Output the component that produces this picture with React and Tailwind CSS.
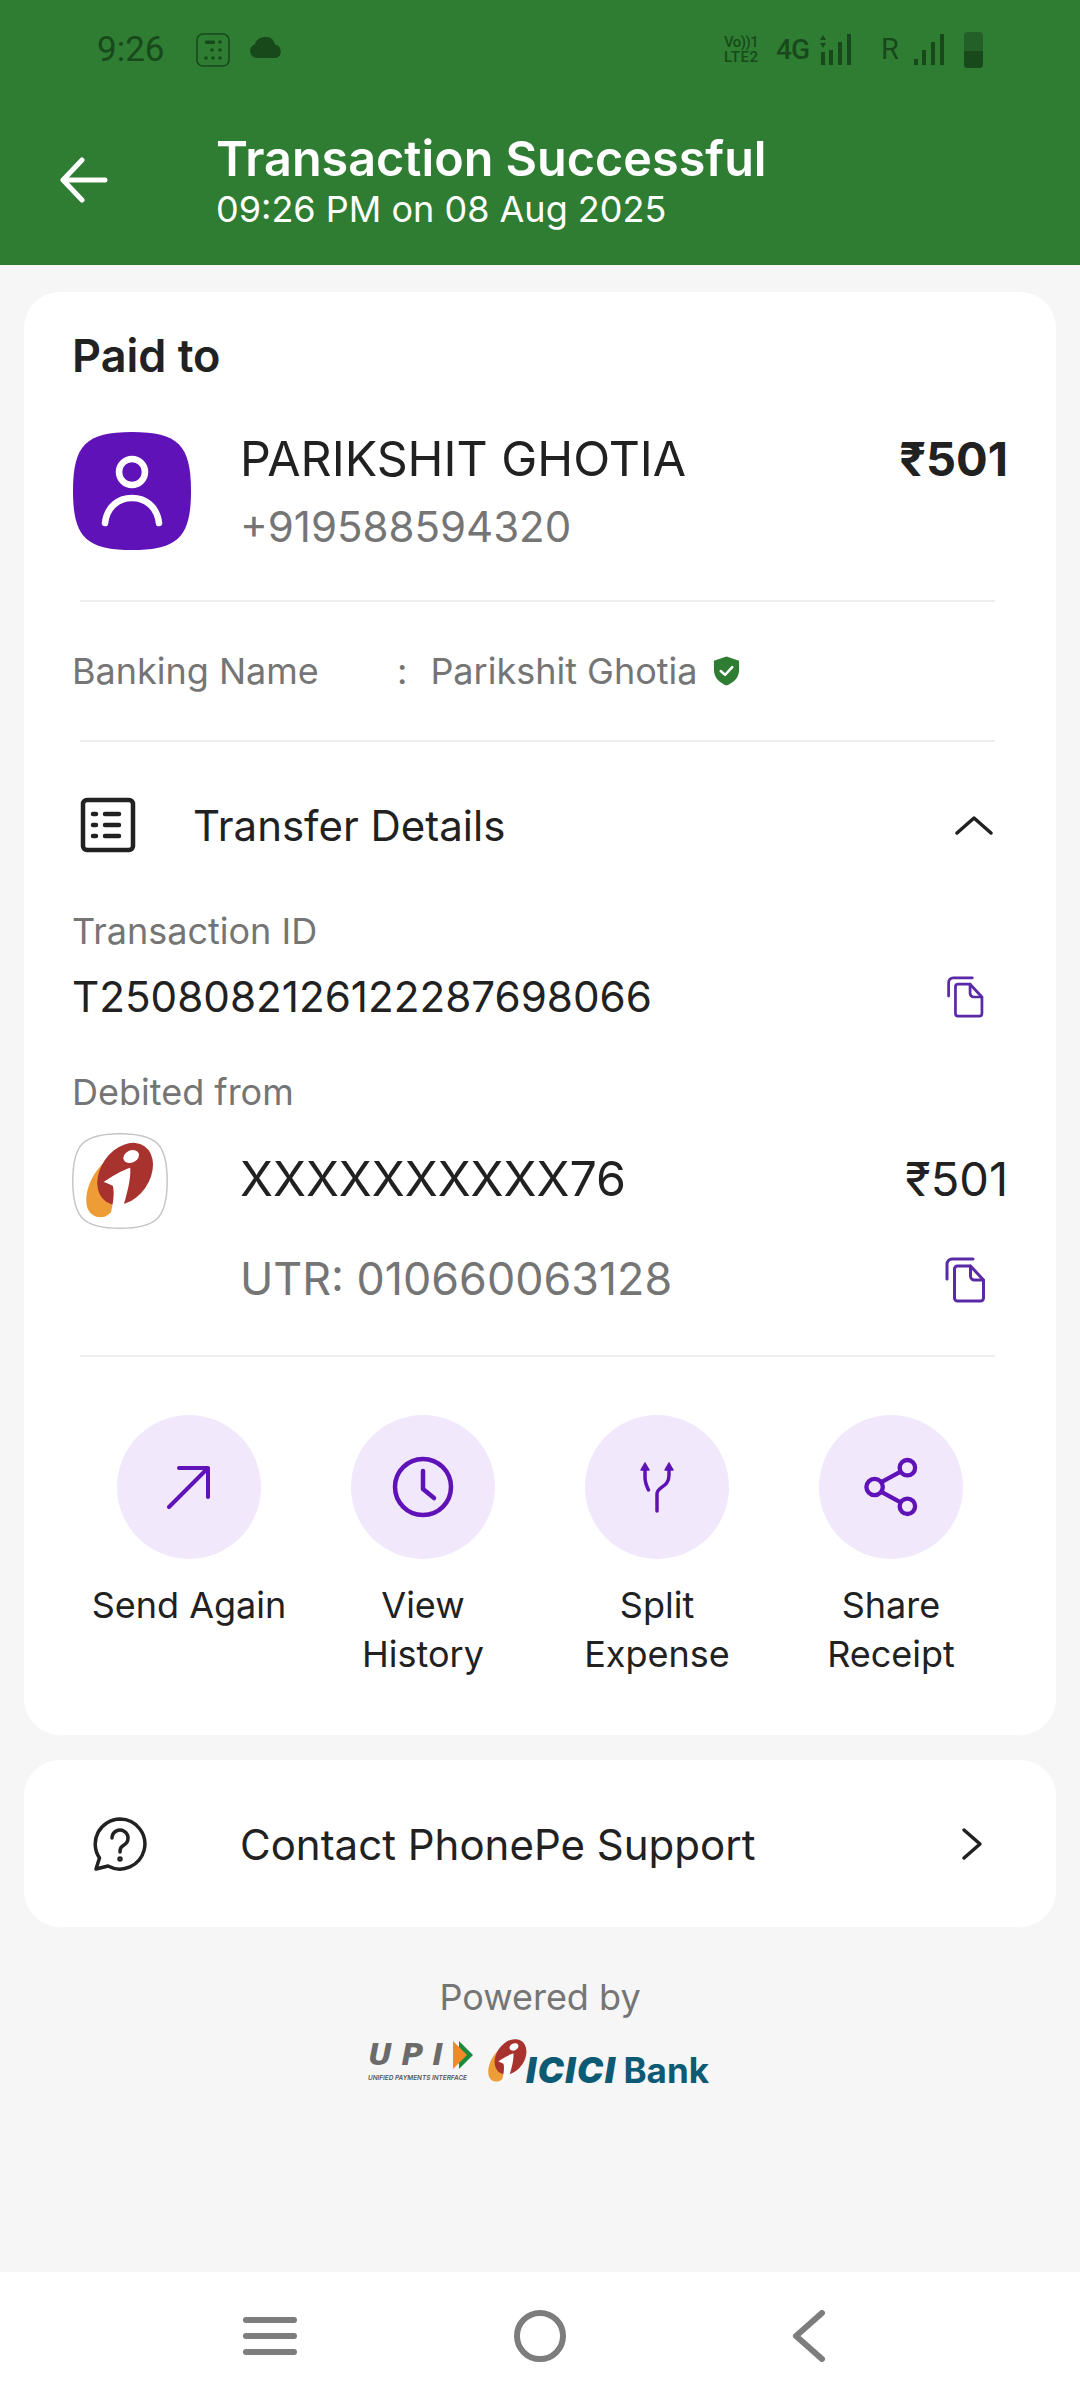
import React from "react";

const PURPLE = "#5f12b8";
const SQUIRCLE = "M60 1C106 1 119 14 119 60S106 119 60 119 1 106 1 60 14 1 60 1Z";

function Copy({ className }) {
  return (
    <svg viewBox="0 0 40 46" className={className} fill="none" stroke="#5a2aa6" strokeWidth="3" strokeLinecap="round" strokeLinejoin="round">
      <path d="M1.500 22V7a5 5 0 0 1 5-5h21" />
      <path d="M9 12a3 3 0 0 1 3-3h13l13 14v18a3 3 0 0 1-3 3H12a3 3 0 0 1-3-3z" />
      <path d="M25 9v10a4 4 0 0 0 4 4h9" />
    </svg>
  );
}

function IciciMark() {
  return (
    <>
      <path d="M30 30C18 42 13 58 14 68c1 12 10 16 18 14 10-4 20-22 26-32z" fill="#ee9c36" />
      <ellipse cx="52" cy="40" rx="24" ry="33" transform="rotate(35 52 40)" fill="#a8322e" />
      <ellipse cx="58" cy="23" rx="8" ry="6" transform="rotate(-25 58 23)" fill="#fff" />
      <path d="M31 48C38 43 50 36 57 34 58 46 53 62 49 76L36 86C40 72 42 60 40 52 37 50 34 49 31 48z" fill="#fff" />
    </>
  );
}

function Action({ label, children }) {
  return (
    <div className="flex flex-col items-center">
      <div className="w-[144px] h-[144px] rounded-full bg-[#f1e8fb] flex items-center justify-center">{children}</div>
      <div className="mt-[22px] text-center text-[36px] leading-[49px] text-[#212121] whitespace-pre-line">{label}</div>
    </div>
  );
}

function Divider({ className }) {
  return <div className={"ml-[56px] mr-[61px] h-[2px] bg-[#eeeeee] " + className} />;
}

function StatusBar() {
  return (
    <div className="h-[100px] flex items-center justify-between pl-[97px] pr-[97px] text-[#17491b]" style={{ fontFamily: "Roboto, sans-serif" }}>
      <div className="flex items-center">
        <span className="text-[35px] w-[70px] whitespace-nowrap">9:26</span>
        <svg viewBox="0 0 34 34" className="w-[34px] h-[34px] ml-[29px]" fill="none">
          <rect x="1" y="1" width="32" height="32" rx="6" stroke="#17491b" strokeWidth="1.600" />
          <rect x="9" y="7.500" width="10" height="3.400" rx="1" fill="#17491b" />
          <circle cx="24" cy="9" r="1.800" fill="#17491b" />
          <circle cx="16" cy="17" r="1.800" fill="#17491b" /><circle cx="24" cy="17" r="1.800" fill="#17491b" />
          <circle cx="10" cy="25" r="1.800" fill="#17491b" /><circle cx="17" cy="25" r="1.800" fill="#17491b" /><circle cx="24" cy="25" r="1.800" fill="#17491b" />
        </svg>
        <svg viewBox="0 0 34 24" className="w-[34px] h-[24px] ml-[19px] -mt-[4px]" fill="#17491b">
          <path d="M8 22a7 7 0 0 1-2-13.700C7 3.500 11 1 17 1c5 0 8 3 9 7.500A7 7 0 0 1 27 22z" />
        </svg>
      </div>
      <div className="flex items-center">
        <div className="text-[15px] leading-[15px] font-medium w-[40px] whitespace-nowrap">
          <div className="tracking-[-0.5px]">Vo))1</div>
          <div className="tracking-[0.5px]">LTE2</div>
        </div>
        <span className="text-[28px] ml-[12px] font-medium w-[32px] tracking-[-1px]">4G</span>
        <svg viewBox="0 0 34 32" className="w-[34px] h-[32px] ml-[12px]" fill="#17491b">
          <path d="M3 1 6 6H0zM3 14 0 9h6z" /><rect x="1" y="18" width="4" height="13" />
          <rect x="9" y="16" width="4" height="15" /><rect x="18" y="8" width="4" height="23" /><rect x="27" y="0" width="4" height="31" />
        </svg>
        <span className="text-[29px] ml-[27px] w-[18px]">R</span>
        <svg viewBox="0 0 34 32" className="w-[34px] h-[32px] ml-[14px]" fill="#17491b">
          <rect x="1" y="25" width="4" height="6" /><rect x="9" y="16" width="4" height="15" /><rect x="18" y="8" width="4" height="23" /><rect x="27" y="0" width="4" height="31" />
        </svg>
        <div className="ml-[17px] w-[19px] h-[36px] rounded-[4px] bg-[#236028] overflow-hidden flex flex-col justify-end">
          <div className="h-[17px] bg-[#17491b]" />
        </div>
      </div>
    </div>
  );
}

export default function App() {
  return (
    <div className="w-[1080px] h-[2400px] bg-[#f6f6f6] flex flex-col overflow-hidden" style={{ fontFamily: "Inter, sans-serif" }}>
      <div className="h-[265px] bg-[#2f7d33] shrink-0">
        <StatusBar />
        <div className="flex items-center pl-[60px] mt-[32px]">
          <svg viewBox="0 0 48 48" className="w-[48px] h-[48px] -mt-[4px] shrink-0" fill="none" stroke="#fff" strokeWidth="5" strokeLinecap="round" strokeLinejoin="round">
            <path d="M45 24H3M22 4 3 24l19 20" />
          </svg>
          <div className="ml-[108px] text-white">
            <div className="text-[48.500px] leading-[54px] font-semibold whitespace-nowrap">Transaction Successful</div>
            <div className="text-[36px] leading-[46px] whitespace-nowrap">09:26 PM on 08 Aug 2025</div>
          </div>
        </div>
      </div>

      <div className="mx-[24px] mt-[27px] h-[1443px] bg-white rounded-[36px] shrink-0 pt-[37px]">
        <div className="pl-[48px] text-[45px] leading-[54px] font-semibold text-[#212121]">Paid to</div>
        <div className="flex pl-[48px] pr-[48px] mt-[48px] h-[120px]">
          <svg viewBox="0 0 120 120" className="w-[120px] h-[120px] shrink-0" fill="none">
            <path d={SQUIRCLE} fill={PURPLE} />
            <circle cx="60" cy="41" r="13" stroke="#fff" strokeWidth="6.500" />
            <path d="M33 92C35 76 46 67 60 67s25 9 27 25" stroke="#fff" strokeWidth="6.500" strokeLinecap="round" />
          </svg>
          <div className="ml-[48px] flex-1">
            <div className="text-[48.300px] leading-[58px] text-[#212121] -mt-[1px] whitespace-nowrap">PARIKSHIT GHOTIA</div>
            <div className="text-[42px] leading-[50px] text-[#757575] mt-[14px]">+919588594320</div>
          </div>
          <div className="text-[47px] leading-[58px] font-bold text-[#212121] -mt-[1px]">₹501</div>
        </div>
        <Divider className="mt-[49px]" />
        <div className="flex items-center h-[138px] pl-[48px] text-[36px] text-[#757575]">
          <span className="w-[325px]">Banking Name</span>
          <span>:</span>
          <span className="ml-[23px]">Parikshit Ghotia</span>
          <svg viewBox="0 0 30 32" className="w-[29px] h-[32px] ml-[14px]">
            <path d="M15 1 28 5.500V15c0 8-6 13.500-13 16C8 28.500 2 23 2 15V5.500z" fill="#2f7d33" />
            <path d="M9 16l4.500 4L21 12" fill="none" stroke="#fff" strokeWidth="2.500" strokeLinecap="round" strokeLinejoin="round" />
          </svg>
        </div>
        <Divider />
        <div className="flex items-center h-[110px] mt-[28px] pl-[56px] pr-[63px]">
          <svg viewBox="0 0 56 56" className="w-[56px] h-[56px]" fill="none" stroke="#212121">
            <rect x="3" y="3" width="50" height="50" rx="4" strokeWidth="4.500" />
            <g strokeWidth="4.500" strokeLinecap="round">
              <path d="M13 17h3M25 17h14M13 28h3M25 28h14M13 39h3M25 39h14" />
            </g>
          </svg>
          <span className="ml-[57px] text-[42px] text-[#212121] flex-1 mt-[1px]">Transfer Details</span>
          <svg viewBox="0 0 38 20" className="w-[38px] h-[20px]" fill="none" stroke="#212121" strokeWidth="3.500" strokeLinecap="round" strokeLinejoin="round">
            <path d="M2 18 19 3l17 15" />
          </svg>
        </div>
        <div className="pl-[48px] text-[36px] leading-[44px] text-[#757575] mt-[29px]">Transaction ID</div>
        <div className="flex items-center justify-between pl-[48px] pr-[72px] mt-[22px] h-[44px]">
          <span className="text-[42.200px] text-[#212121]">T2508082126122287698066</span>
          <Copy className="w-[37px] h-[42px]" />
        </div>
        <div className="pl-[48px] text-[36px] leading-[44px] text-[#757575] mt-[51px]">Debited from</div>
        <div className="flex pl-[48px] pr-[48px] mt-[19px]">
          <svg viewBox="0 0 120 120" className="w-[96px] h-[96px] shrink-0" fill="none">
            <path d={SQUIRCLE} fill="#fff" stroke="#c4c4c4" strokeWidth="1.800" />
            <g transform="scale(1.277)"><IciciMark /></g>
          </svg>
          <div className="ml-[72px] flex-1">
            <div className="text-[48.300px] leading-[58px] text-[#212121] mt-[17px]">XXXXXXXXXX76</div>
          </div>
          <div className="text-[47px] leading-[58px] text-[#212121] mt-[17px]">₹501</div>
        </div>
        <div className="flex items-center justify-between pl-[216px] pr-[70px] mt-[26px] h-[50px]">
          <span className="text-[44.800px] text-[#757575]">UTR: 010660063128</span>
          <Copy className="w-[41px] h-[46px]" />
        </div>
        <Divider className="mt-[50px]" />
        <div className="grid grid-cols-4 px-[48px] mt-[58px]">
          <Action label="Send Again">
            <svg viewBox="0 0 44 44" className="w-[44px] h-[44px]" fill="none" stroke={PURPLE} strokeWidth="4" strokeLinecap="round" strokeLinejoin="round">
              <path d="M2 42 41 3M12 3h29v29" />
            </svg>
          </Action>
          <Action label={"View\nHistory"}>
            <svg viewBox="0 0 62 62" className="w-[62px] h-[62px]" fill="none" stroke={PURPLE} strokeWidth="4.500" strokeLinecap="round" strokeLinejoin="round">
              <circle cx="31" cy="31" r="28" />
              <path d="M31 15v18l11 9" />
            </svg>
          </Action>
          <Action label={"Split\nExpense"}>
            <svg viewBox="0 0 40 52" className="w-[40px] h-[52px]" fill="none" stroke={PURPLE} strokeWidth="3.500" strokeLinecap="round" strokeLinejoin="round">
              <path d="M20 50V33c0-8 12-6 12-19V7M8 7v9c0 5 1 8 3.500 13" />
              <path d="M4 9l4-7 4 7zM28 9l4-7 4 7z" fill={PURPLE} strokeWidth="1.500" />
            </svg>
          </Action>
          <Action label={"Share\nReceipt"}>
            <svg viewBox="0 0 56 62" className="w-[54px] h-[60px]" fill="none" stroke={PURPLE} strokeWidth="4.500">
              <circle cx="45" cy="11" r="8" /><circle cx="11" cy="31" r="8.500" /><circle cx="45" cy="51" r="8" />
              <path d="M18 26 38 15M18 36l20 11" />
            </svg>
          </Action>
        </div>
      </div>

      <div className="mx-[24px] mt-[25px] h-[167px] bg-white rounded-[36px] shrink-0 flex items-center pl-[68px] pr-[73px]">
        <svg viewBox="0 0 56 56" className="w-[56px] h-[56px]" fill="none" stroke="#212121" strokeWidth="3.500" strokeLinecap="round" strokeLinejoin="round">
          <path d="M28 3a25 25 0 1 1-12 47L4 53l3.500-11A25 25 0 0 1 28 3z" />
          <path d="M20 22a8 8 0 1 1 12 7c-3 2-4 3-4 7" />
          <circle cx="28" cy="43" r="1" fill="#212121" />
        </svg>
        <span className="ml-[92px] text-[42px] text-[#212121] flex-1 mt-[1px]">Contact PhonePe Support</span>
        <svg viewBox="0 0 22 34" className="w-[22px] h-[34px]" fill="none" stroke="#212121" strokeWidth="3.500" strokeLinecap="round" strokeLinejoin="round">
          <path d="M3 3l16 14L3 31" />
        </svg>
      </div>

      <div className="mt-[48px] text-center text-[36px] leading-[44px] text-[#757575]">Powered by</div>
      <div className="flex justify-center items-center mt-[16px] mr-[3px] h-[52px]">
        <div className="flex flex-col items-start w-[105px] mr-[13px]">
          <div className="flex items-center h-[28px]">
            <span className="text-[#6b6b6b] text-[30px] leading-[28px] italic font-bold w-[85px] whitespace-nowrap tracking-[9px]" style={{ fontFamily: "'DejaVu Sans', sans-serif" }}>UPI</span>
            <svg viewBox="0 0 20 28" className="w-[20px] h-[28px]">
              <path d="M6 0l14 14-14 14z" fill="#1b8a3e" /><path d="M0 0l14 14L0 28z" fill="#f08a24" />
            </svg>
          </div>
          <span className="text-[6.400px] leading-[8px] mt-[5px] whitespace-nowrap text-[#555] italic font-semibold">UNIFIED PAYMENTS INTERFACE</span>
        </div>
        <svg viewBox="10 8 72 80" className="w-[42px] h-[47px] shrink-0">
          <IciciMark />
        </svg>
        <span className="text-[#0c5a73] text-[35px] leading-[40px] font-black italic -ml-[2px] mt-[18px] whitespace-nowrap tracking-[1.500px]">ICICI</span>
        <span className="text-[#0c5a73] text-[35px] leading-[40px] font-bold ml-[7px] mt-[18px] whitespace-nowrap">Bank</span>
      </div>

      <div className="mt-auto h-[128px] bg-white flex items-center shrink-0 pb-[1px]">
        <div className="w-[54px] ml-[243px] flex flex-col gap-[10px]">
          <div className="h-[6px] bg-[#7d7d7d] rounded-full" />
          <div className="h-[6px] bg-[#7d7d7d] rounded-full" />
          <div className="h-[6px] bg-[#7d7d7d] rounded-full" />
        </div>
        <div className="w-[52px] h-[52px] ml-[217px] rounded-full border-[6px] border-[#7d7d7d]" />
        <svg viewBox="0 0 34 52" className="w-[34px] h-[52px] ml-[226px]" fill="none" stroke="#7d7d7d" strokeWidth="6" strokeLinecap="round" strokeLinejoin="round">
          <path d="M30 3 4 26l26 23" />
        </svg>
      </div>
    </div>
  );
}
